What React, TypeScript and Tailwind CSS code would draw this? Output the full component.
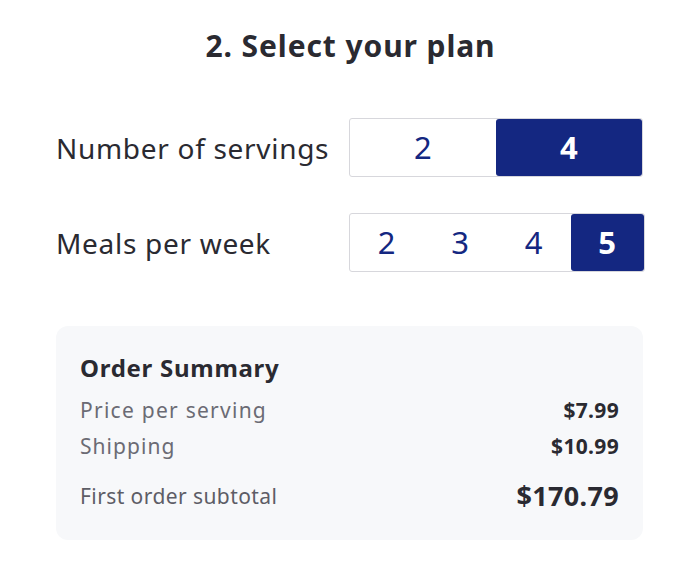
import { useState } from "react";

const font = { fontFamily: '"Noto Sans", "Liberation Sans", sans-serif' };

function Segmented({
  options,
  value,
  onChange,
  width,
}: {
  options: number[];
  value: number;
  onChange: (v: number) => void;
  width: string;
}) {
  return (
    <div className={`flex h-[59px] ${width} rounded-[3px] border border-[#d7d7dc] bg-white`}>
      {options.map((o) => (
        <button
          key={o}
          onClick={() => onChange(o)}
          className={`flex flex-1 items-center justify-center rounded-[3px] text-[31px] ${
            o === value ? "bg-[#142781] font-bold text-white" : "text-[#142781]"
          }`}
        >
          {o}
        </button>
      ))}
    </div>
  );
}

export default function App() {
  const [servings, setServings] = useState(4);
  const [meals, setMeals] = useState(5);

  return (
    <div className="min-h-screen bg-white text-[#2a2a31] tracking-[0.02em]" style={font}>
      <div className="ml-[56px] w-[589px] pt-[25px]">
        <h1 className="text-center text-[30px] font-bold leading-[42px] tracking-[0.03em]">2. Select your plan</h1>

        <div className="mt-[51px] flex items-center justify-between pr-[2px]">
          <span className="text-[28px] tracking-[0.025em]">Number of servings</span>
          <Segmented options={[2, 4]} value={servings} onChange={setServings} width="w-[294px]" />
        </div>

        <div className="mt-[36px] flex items-center justify-between">
          <span className="text-[28px] tracking-[0.025em]">Meals per week</span>
          <Segmented options={[2, 3, 4, 5]} value={meals} onChange={setMeals} width="w-[296px]" />
        </div>

        <div className="mt-[54px] mr-[2px] rounded-[12px] bg-[#f7f8fa] px-[24px] pt-[26px] pb-[26px]">
          <h2 className="text-[24px] font-bold leading-[32px] tracking-[0.03em]">Order Summary</h2>
          <div className="mt-[8px] flex items-center justify-between leading-[36px]">
            <span className="text-[21px] text-[#6b6b74] tracking-[0.06em]">Price per serving</span>
            <span className="text-[21px] font-bold">$7.99</span>
          </div>
          <div className="flex items-center justify-between leading-[36px]">
            <span className="text-[21px] text-[#6b6b74] tracking-[0.05em]">Shipping</span>
            <span className="text-[21px] font-bold">$10.99</span>
          </div>
          <div className="mt-[14px] flex items-center justify-between leading-[36px]">
            <span className="text-[21px] text-[#5d5d66] tracking-[0.02em]">First order subtotal</span>
            <span className="text-[27px] font-bold">$170.79</span>
          </div>
        </div>
      </div>
    </div>
  );
}
